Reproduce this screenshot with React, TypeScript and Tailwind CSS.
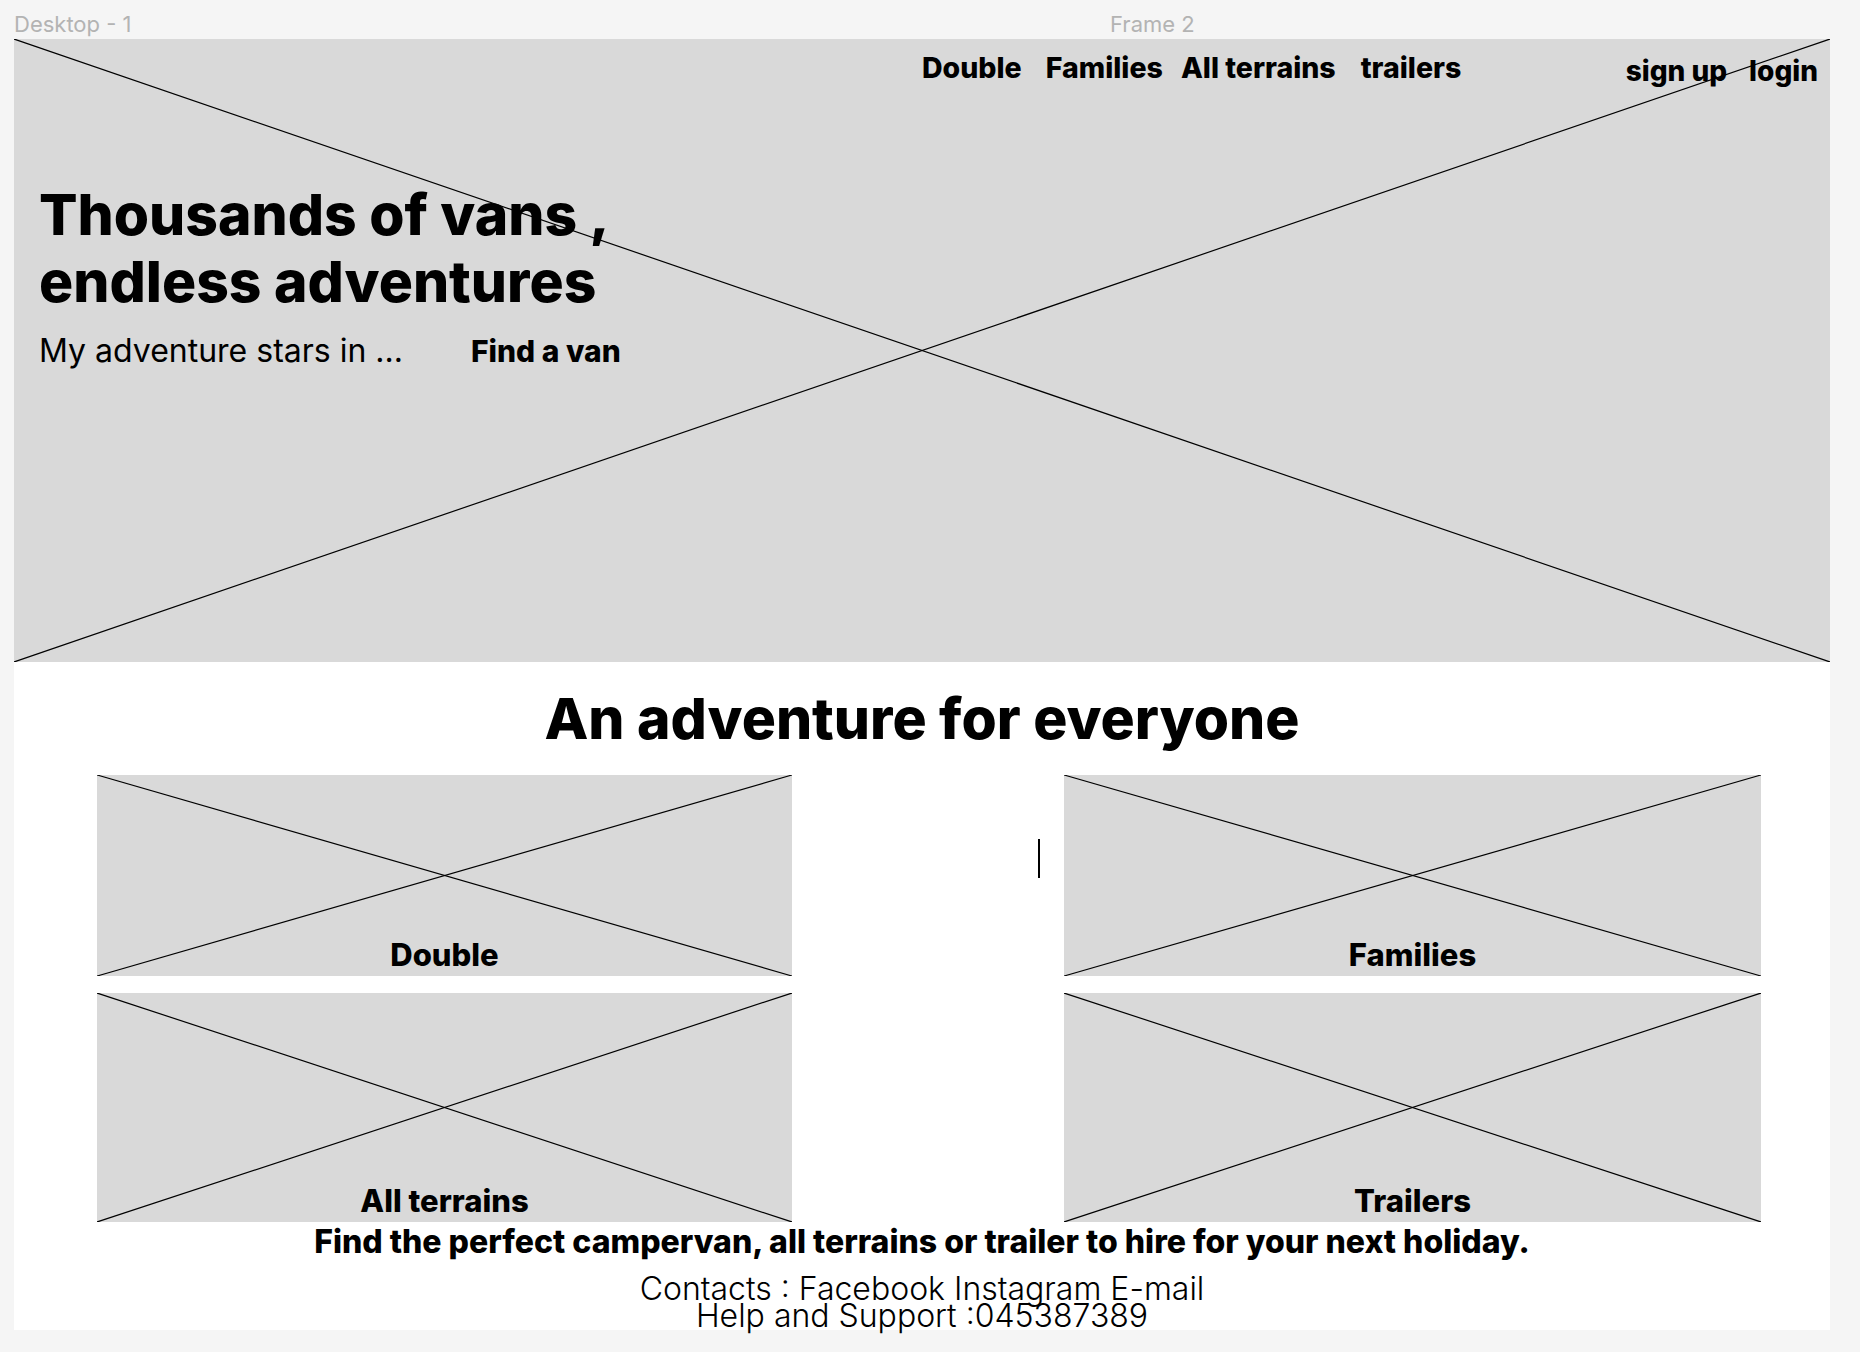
const cards = [
  { label: 'Double', h: 'h-[201px]' },
  { label: 'Families', h: 'h-[201px]' },
  { label: 'All terrains', h: 'h-[229px]' },
  { label: 'Trailers', h: 'h-[229px]' },
]

function Cross() {
  return (
    <svg className="pointer-events-none absolute inset-0 h-full w-full" preserveAspectRatio="none" viewBox="0 0 100 100">
      <line x1="0" y1="0" x2="100" y2="100" stroke="#000" strokeWidth="1.2" vectorEffect="non-scaling-stroke" />
      <line x1="0" y1="100" x2="100" y2="0" stroke="#000" strokeWidth="1.2" vectorEffect="non-scaling-stroke" />
    </svg>
  )
}

export default function App() {
  return (
    <div className="relative min-h-[1352px] bg-[#f5f5f5] font-['Inter',sans-serif] text-black">
      {/* canvas labels */}
      <span className="absolute left-[14px] top-[8px] text-[22px] text-[#b3b3b3]">Desktop - 1</span>
      <span className="absolute left-[1110px] top-[8px] text-[22px] text-[#b3b3b3]">Frame 2</span>

      <div className="h-[39px]" />

      <div className="ml-[14px] w-[1816px] h-[1291px] bg-white">
        {/* hero */}
        <section className="relative h-[623px] bg-[#d9d9d9]">
          <div className="flex items-start pt-[12px] pr-[12px]">
            <nav className="ml-[908px] flex text-[28.5px] font-extrabold leading-[34px]">
              <a className="mr-[24px]">Double</a>
              <a className="mr-[18px]">Families</a>
              <a className="mr-[25px]">All terrains</a>
              <a>trailers</a>
            </nav>
            <div className="ml-auto flex gap-[22px] pt-[3px] text-[28px] font-extrabold leading-[34px]">
              <a>sign up</a>
              <a>login</a>
            </div>
          </div>

          <h1 className="ml-[25px] mt-[93px] text-[57px] font-extrabold leading-[67px]">
            Thousands of vans ,<br />
            endless adventures
          </h1>
          <div className="ml-[25px] mt-[17px] flex items-center leading-[38px]">
            <span className="text-[32px]">My adventure stars in ...</span>
            <button className="ml-[68px] text-[30px] font-extrabold">Find a van</button>
          </div>

          <Cross />
        </section>

        {/* categories */}
        <h2 className="mt-[24px] text-center text-[57px] font-extrabold leading-[66px]">An adventure for everyone</h2>

        <div className="relative ml-[83px] mt-[23px] grid grid-cols-[695px_697px] gap-x-[272px] gap-y-[17px]">
          {cards.map((c) => (
            <div key={c.label} className={`relative flex items-end justify-center bg-[#d9d9d9] pb-[3px] ${c.h}`}>
              <Cross />
              <span className="relative text-[31px] font-extrabold leading-[36px]">{c.label}</span>
            </div>
          ))}
          <span className="absolute left-[941px] top-[64px] h-[39px] w-[2px] bg-black" />
        </div>

        <p className="mt-[2px] text-center text-[32px] font-extrabold leading-[36px]">
          Find the perfect campervan, all terrains or trailer to hire for your next holiday.
        </p>
        <div className="mt-[15px] text-center text-[32px] font-light leading-[27px]">
          <p>Contacts : Facebook Instagram E-mail</p>
          <p>Help and Support :045387389</p>
        </div>
      </div>
    </div>
  )
}
